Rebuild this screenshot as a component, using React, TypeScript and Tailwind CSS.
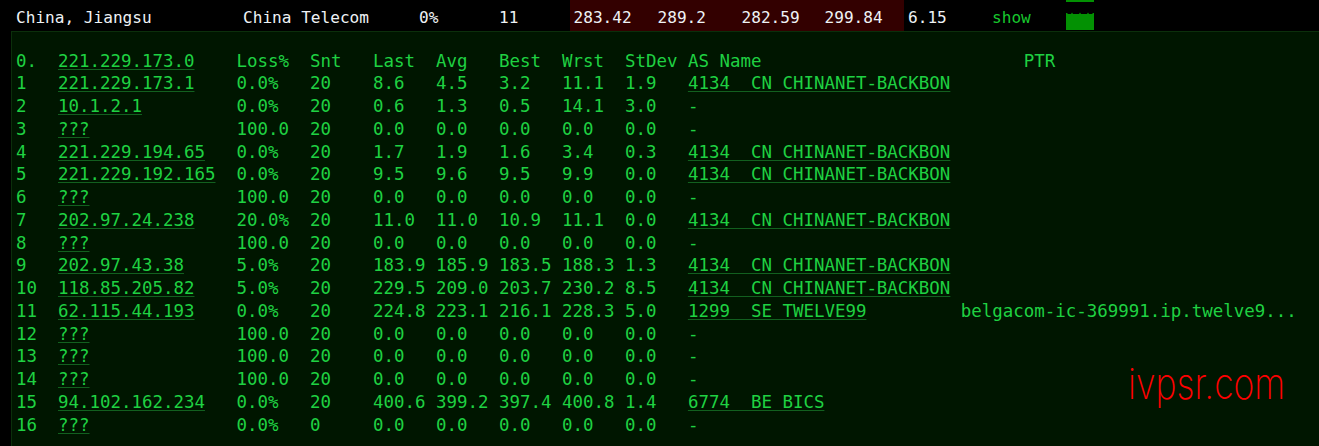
const hops: [string, string, string, string, string, string, string, string, string, string, string][] = [
  ["1", "221.229.173.1", "0.0%", "20", "8.6", "4.5", "3.2", "11.1", "1.9", "4134  CN CHINANET-BACKBON", ""],
  ["2", "10.1.2.1", "0.0%", "20", "0.6", "1.3", "0.5", "14.1", "3.0", "-", ""],
  ["3", "???", "100.0", "20", "0.0", "0.0", "0.0", "0.0", "0.0", "-", ""],
  ["4", "221.229.194.65", "0.0%", "20", "1.7", "1.9", "1.6", "3.4", "0.3", "4134  CN CHINANET-BACKBON", ""],
  ["5", "221.229.192.165", "0.0%", "20", "9.5", "9.6", "9.5", "9.9", "0.0", "4134  CN CHINANET-BACKBON", ""],
  ["6", "???", "100.0", "20", "0.0", "0.0", "0.0", "0.0", "0.0", "-", ""],
  ["7", "202.97.24.238", "20.0%", "20", "11.0", "11.0", "10.9", "11.1", "0.0", "4134  CN CHINANET-BACKBON", ""],
  ["8", "???", "100.0", "20", "0.0", "0.0", "0.0", "0.0", "0.0", "-", ""],
  ["9", "202.97.43.38", "5.0%", "20", "183.9", "185.9", "183.5", "188.3", "1.3", "4134  CN CHINANET-BACKBON", ""],
  ["10", "118.85.205.82", "5.0%", "20", "229.5", "209.0", "203.7", "230.2", "8.5", "4134  CN CHINANET-BACKBON", ""],
  ["11", "62.115.44.193", "0.0%", "20", "224.8", "223.1", "216.1", "228.3", "5.0", "1299  SE TWELVE99", "belgacom-ic-369991.ip.twelve9..."],
  ["12", "???", "100.0", "20", "0.0", "0.0", "0.0", "0.0", "0.0", "-", ""],
  ["13", "???", "100.0", "20", "0.0", "0.0", "0.0", "0.0", "0.0", "-", ""],
  ["14", "???", "100.0", "20", "0.0", "0.0", "0.0", "0.0", "0.0", "-", ""],
  ["15", "94.102.162.234", "0.0%", "20", "400.6", "399.2", "397.4", "400.8", "1.4", "6774  BE BICS", ""],
  ["16", "???", "0.0%", "0", "0.0", "0.0", "0.0", "0.0", "0.0", "-", ""],
];

function A({ children }: { children: string }) {
  return <span className="underline decoration-[#12601f] decoration-1 underline-offset-[2px]">{children}</span>;
}

function Row({ h }: { h: (typeof hops)[number] }) {
  const [n, ip, loss, snt, last, avg, best, wrst, sd, as, ptr] = h;
  const mid =
    " ".repeat(17 - ip.length) +
    loss.padEnd(7) +
    snt.padEnd(6) +
    last.padEnd(6) +
    avg.padEnd(6) +
    best.padEnd(6) +
    wrst.padEnd(6) +
    sd.padEnd(6);
  return (
    <div className="h-[22.75px]">
      {n.padEnd(4)}
      <A>{ip}</A>
      {mid}
      {as === "-" ? as : <A>{as}</A>}
      {ptr ? " ".repeat(26 - as.length) + ptr : ""}
    </div>
  );
}

function Cell({ w, children, red, green }: { w: string; children?: string; red?: boolean; green?: boolean }) {
  return (
    <div
      className={`${w} h-full pt-[2px] shrink-0 leading-[31px] ${red ? "bg-[#330000] pl-[3.5px]" : ""} ${green ? "text-[#18c72e]" : ""}`}
    >
      {children}
    </div>
  );
}

export default function App() {
  return (
    <div className="relative h-[446px] w-[1319px] overflow-hidden bg-black font-['DejaVu_Sans_Mono',monospace]">
      <div className="flex h-[31px] whitespace-pre pl-[16px] text-[16.1px] text-[#eef2f5]">
        <Cell w="w-[227px]">China, Jiangsu</Cell>
        <Cell w="w-[176px]">China Telecom</Cell>
        <Cell w="w-[80px]">0%</Cell>
        <Cell w="w-[71px]">11</Cell>
        <Cell w="w-[84px]" red>283.42</Cell>
        <Cell w="w-[84px]" red>289.2</Cell>
        <Cell w="w-[83px]" red>282.59</Cell>
        <Cell w="w-[83px]" red>299.84</Cell>
        <Cell w="w-[88px] pl-[4px]">6.15</Cell>
        <Cell w="w-[74px]" green>show</Cell>
        <div className="flex w-[28px] shrink-0 flex-col">
          <div className="h-[2px] bg-[#039103]" />
          <svg className="mt-[10px] block" width="28" height="18" viewBox="0 0 28 18">
            <path
              d="M0 1 L1 1 L2 2 L5 2 L6 0.6 L7 2 L13 2 L14 0.6 L15 2 L21 2 L22 0.6 L23 2 L26 2 L27 1 L28 1 L28 18 L0 18 Z"
              fill="#039103"
            />
          </svg>
        </div>
      </div>
      <div className="ml-[11px] h-[415px] border-t border-l border-[#0b2f0b] bg-[#001600] pl-[4px] pt-[17.5px] text-[17.44px] leading-[22.75px] whitespace-pre text-[#1fd142]">
        <div className="h-[22.75px]">
          {"0.  "}
          <A>221.229.173.0</A>
          {"    Loss%  Snt   Last  Avg   Best  Wrst  StDev AS Name                         PTR"}
        </div>
        {hops.map((h) => (
          <Row key={h[0]} h={h} />
        ))}
      </div>
      <div className="absolute left-[1128px] top-[367px] origin-bottom scale-y-[1.2] font-['Inter',sans-serif] text-[35.5px] leading-[44px] font-extralight text-[#ff0000]">
        ivpsr.com
      </div>
    </div>
  );
}
